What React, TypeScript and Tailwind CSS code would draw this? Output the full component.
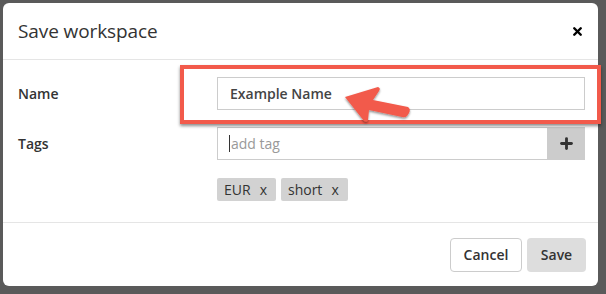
import { Plus, X } from 'lucide-react'

function Chip({ label }: { label: string }) {
  return (
    <span className="h-[23px] pl-[7px] pr-[9px] flex items-center gap-[9px] bg-[#d2d2d2] rounded-[2px] text-[14px] text-[#333]">
      {label}
      <span className="text-[14px]">x</span>
    </span>
  )
}

export default function App() {
  return (
    <div
      className="relative w-[606px] h-[294px] overflow-hidden bg-[#5a5a5a] pt-[3px] pl-[3px]"
      style={{ fontFamily: '"Open Sans", "Noto Sans", sans-serif' }}
    >
      <div className="w-[595px] h-[283px] bg-white rounded-[6px] flex flex-col">
        <div className="h-[57px] border-b border-[#e5e5e5] flex items-center justify-between pl-[15px] pr-[14px]">
          <h2 className="text-[19px] font-medium text-[#333] tracking-[-0.1px]">Save workspace</h2>
          <X className="w-[13px] h-[13px] text-black" strokeWidth={4.5} />
        </div>

        <div className="flex-1 pl-[15px] pr-[13px] pt-[17px]">
          <div className="flex items-center">
            <span className="w-[199px] text-[14px] font-semibold text-[#333]">Name</span>
            <div className="w-[368px] h-[33px] border border-[#cccccc] flex items-center px-[12px] text-[14px] font-semibold text-[#444]">
              Example Name
            </div>
          </div>

          <div className="flex items-center mt-[17px]">
            <span className="w-[199px] text-[14px] font-semibold text-[#333]">Tags</span>
            <div className="w-[368px] h-[33px] flex">
              <div className="flex-1 border border-[#cccccc] border-r-0 flex items-center pl-[11px] text-[14px] text-[#999]">
                <span className="w-px h-[17px] bg-[#333] mr-px" />
                add tag
              </div>
              <div className="w-[38px] bg-[#cccccc] flex items-center justify-center">
                <Plus className="w-[17px] h-[17px] text-[#333]" strokeWidth={4} />
              </div>
            </div>
          </div>

          <div className="flex gap-[5px] mt-[18px] pl-[199px]">
            <Chip label="EUR" />
            <Chip label="short" />
          </div>
        </div>

        <div className="h-[64px] border-t border-[#e5e5e5] flex items-center justify-end gap-[5px] pr-[12px]">
          <button className="w-[72px] h-[34px] border border-[#cccccc] rounded-[4px] text-[14px] font-semibold text-[#333] bg-white">
            Cancel
          </button>
          <button className="w-[59px] h-[34px] rounded-[4px] text-[14px] font-semibold text-[#333] bg-[#dddddd]">
            Save
          </button>
        </div>
      </div>

      {/* annotation overlay */}
      <div className="absolute left-[180px] top-[65px] w-[421px] h-[59px] border-[4px] border-[#f25a4b] shadow-[0_2px_3px_rgba(0,0,0,0.45)]" />
      <svg className="absolute left-[340px] top-[82px]" width="75" height="45" viewBox="0 0 75 45">
        <defs>
          <filter id="sh" x="-20%" y="-20%" width="140%" height="160%">
            <feDropShadow dx="0" dy="1.5" stdDeviation="1.2" floodColor="#000" floodOpacity="0.45" />
          </filter>
        </defs>
        <path
          d="M5 15 L38 5 Q41 6 39 9 L33 18 L68 25 Q71 27 69 31 L67 34 Q65 36 62 35 L29 28 L28 38 Q27 41 24 39 Z"
          fill="#f25a4b"
          filter="url(#sh)"
          strokeLinejoin="round"
        />
      </svg>
    </div>
  )
}
